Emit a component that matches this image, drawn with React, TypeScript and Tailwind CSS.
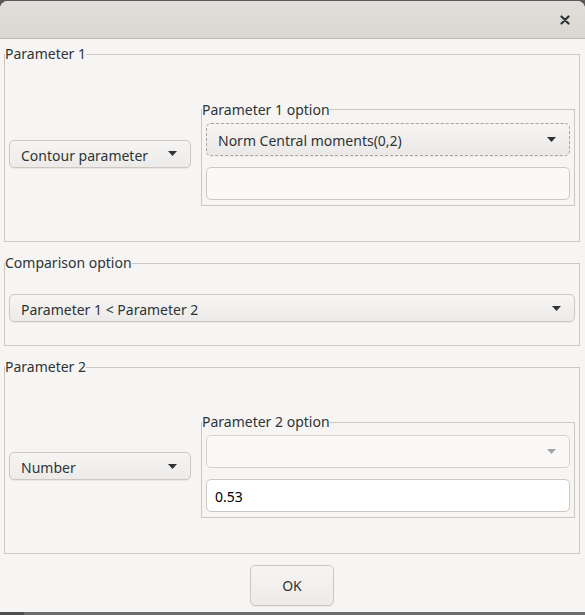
import React from "react";

function Arrow({ muted }: { muted?: boolean }) {
  return (
    <svg width="9" height="5" viewBox="0 0 9 5" className="shrink-0">
      <path d="M0 0H9L4.5 5Z" fill={muted ? "#a3a6a7" : "#2e3436"} />
    </svg>
  );
}

function Combo({
  text,
  variant,
  h,
}: {
  text?: string;
  variant: "normal" | "focus" | "disabled";
  h: "28" | "33";
}) {
  const base =
    "flex items-center justify-between rounded-[5px] pl-[11px] pr-[13px] text-[14px] text-[#2e3436]";
  const height = h === "28" ? "h-[28px]" : "h-[33px]";
  const look =
    variant === "focus"
      ? "border border-dashed border-[#a9a49f] bg-gradient-to-b from-[#f6f5f4] to-[#ebe9e7] shadow-[0_1px_0_rgba(0,0,0,0.04)]"
      : variant === "disabled"
        ? "border border-[#d6d1cd] bg-[#faf9f8]"
        : "border border-[#cdc7c2] bg-gradient-to-b from-[#f6f5f4] to-[#edebe9] shadow-[0_1px_0_rgba(0,0,0,0.05)]";
  return (
    <div className={`${base} ${height} ${look}`}>
      <span className="translate-y-[2px] leading-none">{text}</span>
      <Arrow muted={variant === "disabled"} />
    </div>
  );
}

function LineEdit({ value, white }: { value?: string; white?: boolean }) {
  return (
    <div
      className={`flex h-[33px] items-center rounded-[5px] border border-[#cdc7c2] pl-[8px] text-[14px] text-[#000000] ${
        white ? "bg-[#ffffff]" : "bg-[#faf9f8]"
      }`}
    >
      <span className="translate-y-[1px] leading-none">{value}</span>
    </div>
  );
}

function SubGroup({
  title,
  children,
}: {
  title: string;
  children: React.ReactNode;
}) {
  return (
    <fieldset className="w-[374px] border border-[#cdc7c2]">
      <legend className="text-[14px] leading-[16px] text-[#2e3436]">{title}</legend>
      <div className="flex flex-col gap-[11px] px-[4px] pb-[5px] pt-[5px]">{children}</div>
    </fieldset>
  );
}

function Group({
  title,
  children,
  contentClass,
}: {
  title: string;
  children: React.ReactNode;
  contentClass: string;
}) {
  return (
    <fieldset className="border border-[#cdc7c2]">
      <legend className="text-[14px] leading-[16px] text-[#2e3436]">{title}</legend>
      <div className={contentClass}>{children}</div>
    </fieldset>
  );
}

export default function App() {
  return (
    <div className="h-[615px] w-[585px] overflow-hidden bg-[#5a5a5a] font-['Noto_Sans',sans-serif]">
      <div className="mt-[1px] overflow-hidden rounded-t-[8px] bg-[#f6f5f4]">
        {/* Title bar */}
        <div className="flex h-[38px] items-center justify-end border-b border-[#bfb8b1] bg-gradient-to-b from-[#e2dfdb] to-[#dad6d2] pr-[15px]">
          <svg width="10" height="10" viewBox="0 0 10 10">
            <path
              d="M1.5 1.5L8.5 8.5M8.5 1.5L1.5 8.5"
              stroke="#2e3436"
              strokeWidth="2.2"
              strokeLinecap="round"
            />
          </svg>
        </div>

        {/* Body */}
        <div className="flex h-[573px] flex-col pl-[4px] pr-[5px] pt-[7px]">
          <Group
            title="Parameter 1"
            contentClass="flex h-[179px] items-center justify-between pl-[4px] pr-[4px] pt-[4px]"
          >
            <div className="w-[182px]">
              <Combo text="Contour parameter" variant="normal" h="28" />
            </div>
            <SubGroup title="Parameter 1 option">
              <Combo text="Norm Central moments(0,2)" variant="focus" h="33" />
              <LineEdit />
            </SubGroup>
          </Group>

          <div className="mt-[13px]">
            <Group
              title="Comparison option"
              contentClass="flex h-[74px] flex-col justify-center pl-[4px] pr-[4px]"
            >
              <Combo text="Parameter 1 < Parameter 2" variant="normal" h="28" />
            </Group>
          </div>

          <div className="mt-[13px]">
            <Group
              title="Parameter 2"
              contentClass="flex h-[178px] items-center justify-between pl-[4px] pr-[4px] pt-[4px]"
            >
              <div className="w-[182px]">
                <Combo text="Number" variant="normal" h="28" />
              </div>
              <SubGroup title="Parameter 2 option">
                <Combo variant="disabled" h="33" />
                <LineEdit value="0.53" white />
              </SubGroup>
            </Group>
          </div>

          <div className="mt-[11px] flex justify-center">
            <button className="flex h-[41px] w-[84px] items-center justify-center rounded-[5px] border border-[#cdc7c2] bg-gradient-to-b from-[#f6f5f4] to-[#edebe9] text-[14px] text-[#2e3436] shadow-[0_1px_0_rgba(0,0,0,0.05)]">
              OK
            </button>
          </div>
        </div>
      </div>
      <div className="flex h-[3px]">
        <div className="w-[24px] bg-[#4e4e4e]" />
        <div className="flex-1 bg-[#6e6e6e]" />
      </div>
    </div>
  );
}
